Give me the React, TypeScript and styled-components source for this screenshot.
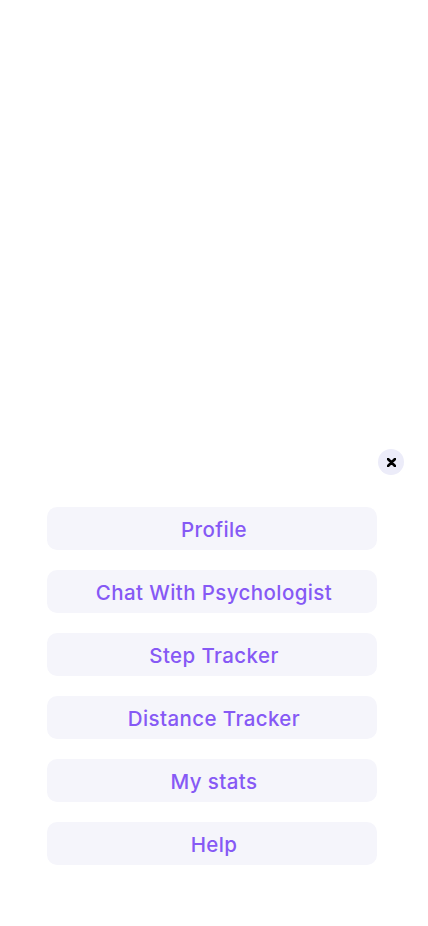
import * as React from 'react';
import styled, { createGlobalStyle } from 'styled-components';

const GlobalStyle = createGlobalStyle`
  html, body {
    margin: 0;
    padding: 0;
    background: #ffffff;
  }
  * {
    box-sizing: border-box;
  }
`;

const Page = styled.div`
  width: 428px;
  height: 926px;
  display: flex;
  flex-direction: column;
  padding-top: 449px;
  font-family: 'Inter', 'Open Sans', sans-serif;
`;

const CloseRow = styled.div`
  display: flex;
  justify-content: flex-end;
  padding-right: 24px;
`;

const CloseButton = styled.button`
  width: 26px;
  height: 26px;
  border-radius: 50%;
  border: none;
  padding: 0;
  background: #ececf9;
  display: flex;
  align-items: center;
  justify-content: center;
  cursor: pointer;
`;

const Menu = styled.nav`
  display: flex;
  flex-direction: column;
  gap: 20px;
  padding: 32px 51px 0 47px;
`;

const MenuItem = styled.button`
  height: 43px;
  width: 330px;
  border: none;
  border-radius: 10px;
  background: #f5f5fb;
  color: #8659f5;
  font-family: 'Inter', 'Open Sans', sans-serif;
  font-size: 20.5px;
  font-weight: 500;
  letter-spacing: 0.4px;
  display: flex;
  align-items: center;
  justify-content: center;
  padding: 2px 0 0 4px;
  cursor: pointer;
`;

const items = ['Profile', 'Chat With Psychologist', 'Step Tracker', 'Distance Tracker', 'My stats', 'Help'];

export default function App(): JSX.Element {
  return (
    <>
      <GlobalStyle />
      <Page>
        <CloseRow>
          <CloseButton aria-label="Close">
            <svg width="9" height="9" viewBox="0 0 9 9">
              <path d="M1 1L8 8M8 1L1 8" stroke="#000" strokeWidth="2.6" strokeLinecap="round" />
            </svg>
          </CloseButton>
        </CloseRow>
        <Menu>
          {items.map((label) => (
            <MenuItem key={label}>{label}</MenuItem>
          ))}
        </Menu>
      </Page>
    </>
  );
}
